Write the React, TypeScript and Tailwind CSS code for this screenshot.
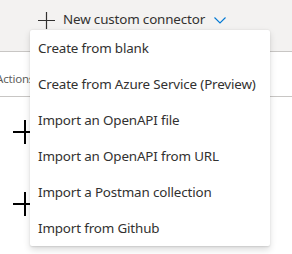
import React from "react";

const items = [
  "Create from blank",
  "Create from Azure Service (Preview)",
  "Import an OpenAPI file",
  "Import an OpenAPI from URL",
  "Import a Postman collection",
  "Import from Github",
];

function BigPlus() {
  return (
    <svg width="24" height="24" viewBox="0 0 24 24" className="block">
      <path d="M12 0V24M0 12H24" stroke="#000" strokeWidth="2" fill="none" />
    </svg>
  );
}

export default function App() {
  return (
    <div
      className="relative w-[292px] h-[254px] overflow-hidden bg-white text-[#323130]"
      style={{ fontFamily: '"Noto Sans", "Open Sans", sans-serif' }}
    >
      {/* command bar */}
      <div className="h-[52px] bg-[#f3f2f1] border-b border-[#c8c6c4] flex items-start pt-[8px] pl-[38px]">
        <div className="flex items-center h-[24px]">
          <svg width="17" height="17" viewBox="0 0 17 17" className="block">
            <path d="M8.5 0V17M0 8.5H17" stroke="#323130" strokeWidth="1.2" fill="none" />
          </svg>
          <span className="ml-[8px] text-[13.4px] tracking-[-0.15px] leading-none">New custom connector</span>
          <svg width="12" height="7" viewBox="0 0 12 7" className="block ml-[9px] mt-[1px]">
            <path d="M0.5 0.5L6 6L11.5 0.5" stroke="#0078d4" strokeWidth="1.1" fill="none" />
          </svg>
        </div>
      </div>
      {/* table header */}
      <div className="h-[45px] border-b border-[#c8c6c4] flex items-center -ml-[4px]">
        <span className="text-[11.5px] tracking-[-0.2px] text-[#605e5c] mt-[9px]">Actions</span>
      </div>
      <div className="flex flex-col pl-[13px] pt-[23px] gap-[48px]">
        <BigPlus />
        <BigPlus />
      </div>

      {/* dropdown menu */}
      <div className="absolute left-[30px] top-[30px] w-[240px] bg-white shadow-[0_3.2px_7.2px_rgba(0,0,0,0.132),0_0.6px_1.8px_rgba(0,0,0,0.108)] rounded-[2px]">
        {items.map((t) => (
          <div
            key={t}
            className="h-[36px] flex items-center pl-[8px] text-[13.4px] tracking-[-0.15px] text-[#323130] whitespace-nowrap"
          >
            {t}
          </div>
        ))}
      </div>
    </div>
  );
}
